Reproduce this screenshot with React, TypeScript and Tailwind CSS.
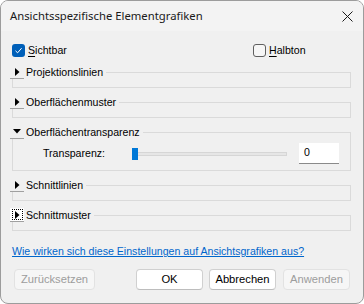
import React from "react";

function Arrow({ open }: { open?: boolean }) {
  if (open) {
    return (
      <svg width="8" height="5" viewBox="0 0 8 5">
        <path d="M0 0 L8 0 L4 4.5 Z" fill="#000" />
      </svg>
    );
  }
  return (
    <svg width="5" height="8" viewBox="0 0 5 8">
      <path d="M0 0 L4.5 4 L0 8 Z" fill="#000" />
    </svg>
  );
}

function Group({
  title,
  open,
  focused,
  children,
}: {
  title: string;
  open?: boolean;
  focused?: boolean;
  children?: React.ReactNode;
}) {
  return (
    <fieldset className="mr-[1px] border border-[#dadada]">
      <legend className="ml-[-3px] flex items-center pr-[3px]">
        <span
          className={
            "flex h-[14px] w-[14px] items-center justify-center border-b border-[#a0a0a0] " +
            (focused ? "bg-white" : "bg-[#f0f0f0]")
          }
        >
          <span
            className={
              "flex h-[11px] w-[11px] items-center justify-center " +
              (focused ? "outline outline-1 outline-dotted outline-black -outline-offset-1" : "")
            }
          >
            <Arrow open={open} />
          </span>
        </span>
        <span className="ml-[2px] leading-[14px]">{title}</span>
      </legend>
      {children ?? <div className="h-[8px]" />}
    </fieldset>
  );
}

export default function App() {
  return (
    <div className="h-[304px] w-[364px] bg-white font-['Liberation_Sans',Arial,sans-serif] text-[10.6px] text-black">
      <div className="flex h-full flex-col overflow-hidden rounded-[8px] border border-[#9c9c9c] bg-[#f0f0f0]">
        {/* title bar */}
        <div className="flex h-[30px] shrink-0 items-center justify-between bg-[#f3f3f3] pl-[9px] pr-[9px]">
          <span className="font-['Noto_Sans',sans-serif] text-[11.3px] text-[#1a1a1a]">
            Ansichtsspezifische Elementgrafiken
          </span>
          <svg width="11" height="11" viewBox="0 0 11 11" className="mr-[1px]">
            <path d="M0.5 0.5 L10.5 10.5 M10.5 0.5 L0.5 10.5" stroke="#1a1a1a" strokeWidth="1" />
          </svg>
        </div>

        <div className="flex flex-1 flex-col px-[11px]">
          {/* checkboxes */}
          <div className="mt-[13px] flex h-[13px] items-center">
            <div className="flex w-[241px] items-center">
              <span className="flex h-[13px] w-[13px] items-center justify-center rounded-[3px] bg-[#005fb8]">
                <svg width="9" height="9" viewBox="0 0 9 9">
                  <path d="M1.5 4.8 L3.6 6.8 L7.6 2.2" stroke="#fff" strokeWidth="1" fill="none" />
                </svg>
              </span>
              <span className="ml-[3px]">
                <span className="underline underline-offset-2">S</span>ichtbar
              </span>
            </div>
            <span className="h-[13px] w-[13px] rounded-[3px] border border-[#5f5f5f] bg-[#f6f6f6]" />
            <span className="ml-[3px]">
              <span className="underline underline-offset-2">H</span>albton
            </span>
          </div>

          {/* groups */}
          <div className="mt-[8px] flex flex-col gap-[7px]">
            <Group title="Projektionslinien" />
            <Group title="Oberflächenmuster" />
            <Group title="Oberflächentransparenz" open>
              <div className="mt-[4px] mb-[6px] flex h-[21px] items-center">
                <span className="ml-[30px] w-[89px]">Transparenz:</span>
                <div className="relative flex h-[12px] w-[155px] items-center">
                  <div className="h-[4px] w-full border border-[#d6d6d6] bg-[#e6e6e6]" />
                  <div className="absolute left-0 top-0 h-[12px] w-[6px] bg-[#0078d7]" />
                </div>
                <div className="ml-[12px] flex h-[21px] w-[40px] items-center border-b border-[#8a8a8a] bg-white pl-[5px]">
                  0
                </div>
              </div>
            </Group>
            <Group title="Schnittlinien" />
            <Group title="Schnittmuster" focused />
          </div>

          {/* link */}
          <a className="mt-[14px] leading-[13px] text-[#0066cc] underline underline-offset-1">
            Wie wirken sich diese Einstellungen auf Ansichtsgrafiken aus?
          </a>

          {/* buttons */}
          <div className="mt-[11px] flex text-[11.2px]">
            <button className="ml-[2px] h-[21px] w-[81px] rounded-[4px] border border-[#e2e2e2] bg-[#f6f6f6] text-[#9d9d9d]">
              Zurücksetzen
            </button>
            <div className="flex-1" />
            <button className="h-[21px] w-[67px] rounded-[4px] border border-[#d0d0d0] border-b-[#bdbdbd] bg-white">
              OK
            </button>
            <button className="ml-[6px] h-[21px] w-[67px] rounded-[4px] border border-[#d0d0d0] border-b-[#bdbdbd] bg-white">
              Abbrechen
            </button>
            <button className="ml-[7px] mr-[2px] h-[21px] w-[67px] rounded-[4px] border border-[#e2e2e2] bg-[#f6f6f6] text-[#9d9d9d]">
              Anwenden
            </button>
          </div>
        </div>
      </div>
    </div>
  );
}
